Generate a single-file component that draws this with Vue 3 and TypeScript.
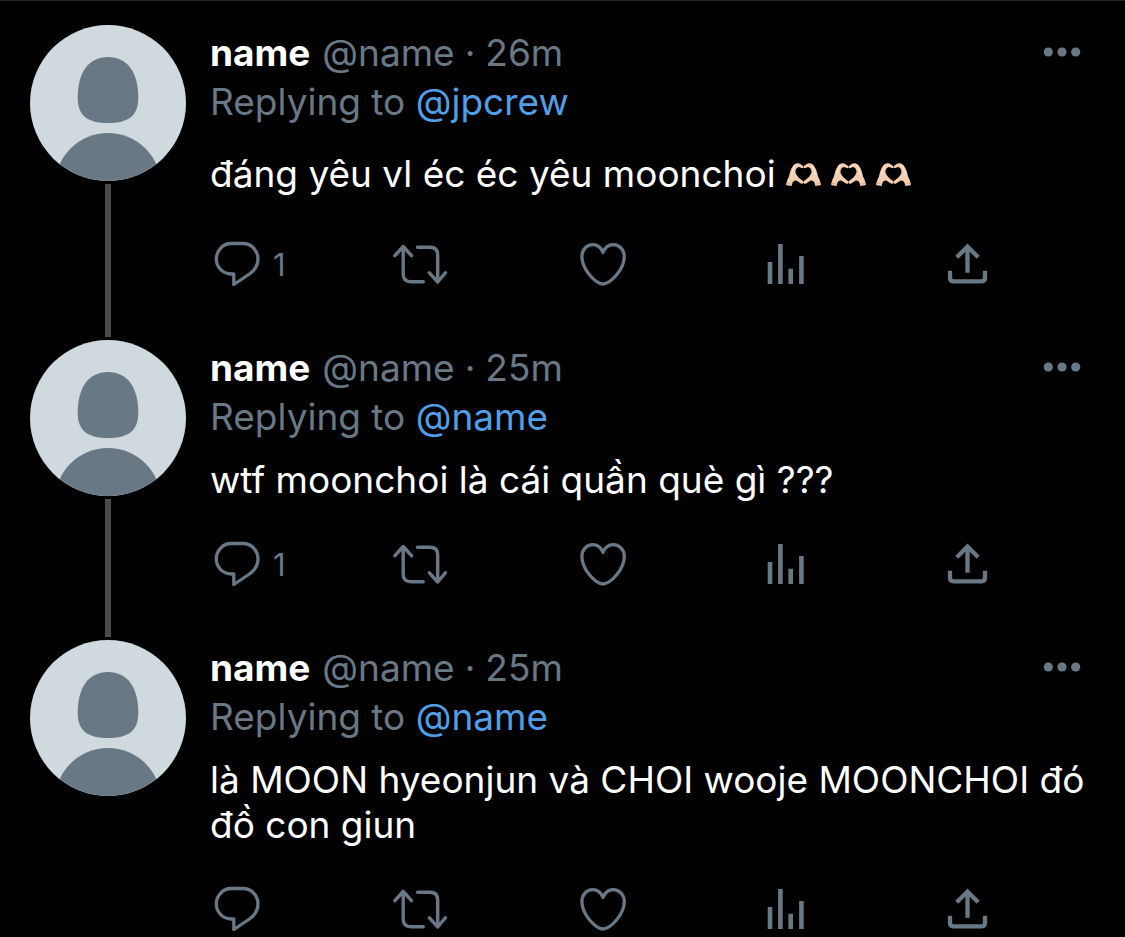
<script setup lang="ts">
interface Tweet {
  id: number
  age: string
  replyTo: string
  text: string
  hearts: number
  replies: number | null
}

const tweets: Tweet[] = [
  { id: 1, age: '26m', replyTo: '@jpcrew', text: 'đáng yêu vl éc éc yêu moonchoi', hearts: 3, replies: 1 },
  { id: 2, age: '25m', replyTo: '@name', text: 'wtf moonchoi là cái quần què gì ???', hearts: 0, replies: 1 },
  { id: 3, age: '25m', replyTo: '@name', text: 'là MOON hyeonjun và CHOI wooje MOONCHOI đó đồ con giun', hearts: 0, replies: null },
]
</script>

<template>
  <main class="thread">
    <article v-for="(tweet, index) in tweets" :key="tweet.id" class="tweet">
      <div class="rail">
        <svg class="avatar" viewBox="0 0 156 156" aria-hidden="true">
          <defs>
            <clipPath :id="`avatar-${tweet.id}`"><circle cx="78" cy="78" r="78" /></clipPath>
          </defs>
          <g :clip-path="`url(#avatar-${tweet.id})`">
            <rect width="156" height="156" fill="#cfd9de" />
            <path d="M78 32C98 32 108.300 48 108.300 73C108.300 91 98 98 78 98S47.700 91 47.700 73C47.700 48 58 32 78 32z" fill="#697885" />
            <circle cx="78" cy="161" r="53" fill="#697885" />
          </g>
        </svg>
        <div v-if="index < tweets.length - 1" class="connector"></div>
      </div>

      <div class="content">
        <header class="meta">
          <div class="byline">
            <strong class="name">name</strong>
            <span>@name</span>
            <span>·</span>
            <span>{{ tweet.age }}</span>
          </div>
          <button class="more" type="button" aria-label="More">
            <svg viewBox="0 0 38 12" aria-hidden="true">
              <circle cx="5.300" cy="6" r="4.600" /><circle cx="19" cy="6" r="4.600" /><circle cx="32.700" cy="6" r="4.600" />
            </svg>
          </button>
        </header>
        <div class="replying">Replying to <a href="#">{{ tweet.replyTo }}</a></div>

        <p class="text" :class="{ 'with-emoji': tweet.hearts > 0 }">
          {{ tweet.text }}
          <span v-if="tweet.hearts" class="emojis" role="img" aria-label="heart hands">
            <svg v-for="n in tweet.hearts" :key="n" class="emoji" viewBox="0 0 105 72">
              <g v-for="side in 2" :key="side" :transform="side === 2 ? 'translate(105 0) scale(-1 1)' : undefined">
                <path d="M0 64L5 48C10 42 10 32 14 22C18 11 23 4 29 2C34 0 40 1 44 4L51 9C54 12 52 17 47 15L39 12C32 13 27 21 29 30C32 39 42 48 51 54C55 58 52 64 46 62L32 53C25 52 21 55 19 61L17 69L2 67z" fill="#f3ceb0" />
                <path d="M3 60L17 64" fill="none" stroke="#d9a27f" stroke-width="2.500" />
                <path d="M28 7C22 13 19 24 18 36" fill="none" stroke="#ffe2ca" stroke-width="4" />
              </g>
            </svg>
          </span>
        </p>

        <div class="actions">
          <button class="action" type="button" aria-label="Reply">
            <svg class="icon" viewBox="0 0 52 52" stroke-width="3.300" stroke-linejoin="round">
              <path d="M20 5.500h12C40.500 5.500 47 12.500 47 21c0 6-3 11-8.500 15L22.800 46.500V36h-2.300C12 36 5.300 29.500 5.300 21S12 5.500 20 5.500z" />
            </svg>
            <span v-if="tweet.replies" class="count">{{ tweet.replies }}</span>
          </button>
          <button class="action" type="button" aria-label="Retweet">
            <svg class="icon" viewBox="0 0 52 52" stroke-width="3.400" stroke-linecap="round" stroke-linejoin="round">
              <path d="M.9 17.700L9.200 8.500L17.500 17.700M9.200 9V36q0 7.700 7.700 7.700H29.300M23.500 9.300H36q7.700 0 7.700 7.700V44M35.200 34.700L43.700 44L51.500 34.700" />
            </svg>
          </button>
          <button class="action" type="button" aria-label="Like">
            <svg class="icon" viewBox="0 0 52 52" stroke-width="3.300" stroke-linejoin="round">
              <path d="M26 14.500C24 9.500 20 6.700 15.800 6.700C9.500 6.700 4.900 11.700 4.900 18.500C4.900 31.500 18.500 45.700 26 46C33.500 45.700 47.300 31.500 47.300 18.500C47.300 11.700 42.500 6.700 36.200 6.700C32 6.700 28 9.500 26 14.500z" />
            </svg>
          </button>
          <button class="action" type="button" aria-label="View activity">
            <svg class="icon" viewBox="0 0 52 52" stroke-width="4.600">
              <path d="M11 24V46M21.400 6V46M31.700 30.700V46M42.400 18V46" />
            </svg>
          </button>
          <button class="action" type="button" aria-label="Share">
            <svg class="icon" viewBox="0 0 52 52" stroke-width="4.300">
              <path d="M14.800 19.300L25.500 8.500L36.200 19.300M25.500 9V34.700M8 32.700V40q0 3.300 3.300 3.300H39.700q3.300 0 3.300-3.300V32.700" />
            </svg>
          </button>
        </div>
      </div>
    </article>
  </main>
</template>

<style>
html,
body {
  background: #000;
}
body {
  margin: 0;
}
</style>

<style scoped>
.thread {
  box-sizing: border-box;
  height: 100vh;
  overflow: hidden;
  padding-top: 24px;
  border-top: 1px solid #222426;
  background: #000;
  color: #fff;
  font-family: Inter, "Liberation Sans", sans-serif;
  font-size: 37px;
}
.tweet {
  display: flex;
  gap: 24px;
  padding-left: 30px;
}
.rail {
  display: flex;
  flex: none;
  flex-direction: column;
  align-items: center;
  gap: 3px;
}
.avatar {
  display: block;
  width: 156px;
  height: 156px;
}
.connector {
  flex: 1;
  width: 6px;
  margin-bottom: 3px;
  background: #4a4a4a;
}
.content {
  flex: 1;
  min-width: 0;
  padding: 3px 0 50px;
}
.meta {
  display: flex;
  align-items: center;
  justify-content: space-between;
  padding-right: 44px;
}
.byline {
  display: flex;
  gap: 10px;
}
.byline,
.replying {
  color: #697885;
  line-height: 49px;
}
.name {
  margin-right: 2px;
  color: #fff;
  font-weight: 700;
}
.replying a {
  color: #4f9fe8;
  text-decoration: none;
}
button {
  padding: 0;
  border: 0;
  background: none;
  color: #697885;
  font: inherit;
  cursor: pointer;
}
.more {
  display: flex;
  padding-bottom: 2px;
}
.more svg {
  width: 38px;
  height: 12px;
  fill: #697885;
}
.text {
  margin: 16px 0 36px;
  padding-right: 36px;
  line-height: 45px;
}
.with-emoji {
  padding-top: 9px;
  padding-bottom: 6px;
}
.emojis {
  display: inline-flex;
  gap: 10px;
}
.emoji {
  width: 35px;
  height: 24px;
}
.actions {
  display: grid;
  grid-template-columns: repeat(5, 1fr);
  padding-left: 1px;
}
.action {
  display: flex;
  align-items: center;
  gap: 10px;
}
.icon {
  width: 52px;
  height: 52px;
  overflow: visible;
  fill: none;
  stroke: #697885;
}
.count {
  font-size: 31px;
  font-weight: 400;
}
</style>
